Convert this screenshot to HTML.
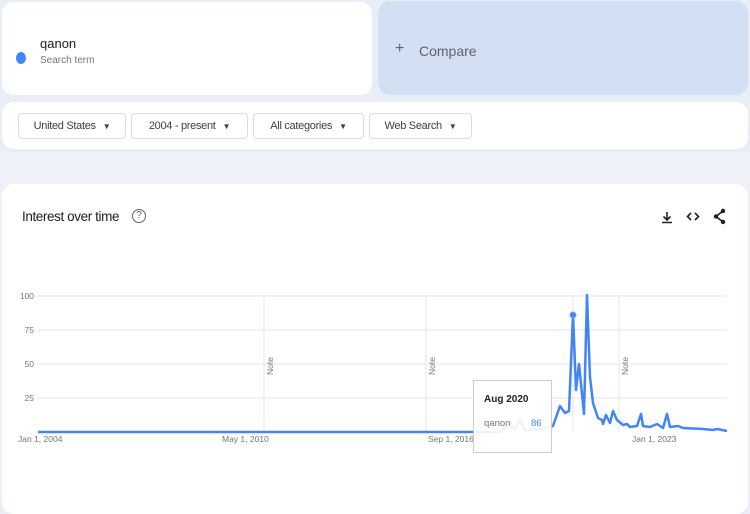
<!DOCTYPE html>
<html><head><meta charset="utf-8"><style>
*{margin:0;padding:0;box-sizing:border-box}
body{width:750px;height:500px;overflow:hidden;background:#e9eef6;font-family:"Liberation Sans",sans-serif;position:relative}
.card{position:absolute;background:#fff;border-radius:12px}
.btn{position:absolute;top:113px;height:26px;border:1px solid #dadce0;border-radius:4px;font-size:11px;letter-spacing:-0.3px;color:#3c4043;display:flex;align-items:center;justify-content:center;background:#fff}
.btn span{font-size:8px;margin-left:7px}
</style></head><body>
<div style="position:absolute;left:0;top:152px;width:750px;height:348px;background:#eef2f8"></div>
<div class="card" style="left:2px;top:2px;width:370px;height:93px">
  <div style="position:absolute;left:14px;top:50px;width:10px;height:12px;border-radius:50%;background:#4285f4"></div>
  <div style="position:absolute;left:38px;top:34px;font-size:13px;color:#202124">qanon</div>
  <div style="position:absolute;left:38px;top:53px;font-size:10px;color:#70757a">Search term</div>
</div>
<div style="position:absolute;left:378px;top:1px;width:370px;height:94px;background:#d3e0f3;border-radius:12px">
  <div style="position:absolute;left:17px;top:39px;font-size:16px;color:#5f6368">+</div>
  <div style="position:absolute;left:41px;top:42px;font-size:14px;color:#5f6368">Compare</div>
</div>
<div class="card" style="left:2px;top:102px;width:746px;height:47px"></div>
<div class="btn" style="left:18px;width:108px">United States<span>▼</span></div>
<div class="btn" style="left:131px;width:117px">2004 - present<span>▼</span></div>
<div class="btn" style="left:253px;width:111px">All categories<span>▼</span></div>
<div class="btn" style="left:369px;width:103px;top:113px">Web Search<span>▼</span></div>
<div class="card" style="left:2px;top:184px;width:746px;height:330px">
  <div style="position:absolute;left:20px;top:25px;font-size:13.5px;letter-spacing:-0.4px;color:#202124">Interest over time</div>
  <div style="position:absolute;left:130px;top:25px;width:14px;height:14px;border:1.3px solid #5f6368;border-radius:50%;font-size:10px;color:#5f6368;text-align:center;line-height:12px">?</div>
</div>
<svg width="750" height="500" style="position:absolute;left:0;top:0">
  <g stroke="#202124" stroke-width="1.6" fill="none">
    <path d="M667 212v8M663.5 216.5l3.5 3.5 3.5-3.5M662 222.5h10"/>
    <path d="M691 213l-3.5 3.5 3.5 3.5M695 213l3.5 3.5-3.5 3.5"/>
    <path d="M723 211l-7 5.5 7 5.5"/>
  </g>
  <g fill="#202124"><circle cx="723" cy="211" r="2.2"/><circle cx="716" cy="216.5" r="2.2"/><circle cx="723" cy="222" r="2.2"/></g>
  <g stroke="#e6e6e6" stroke-width="1">
    <path d="M38 296H727M38 330H727M38 364H727M38 398H727"/>
    <path d="M264 296V432M426 296V432M619 296V432M573 296V432"/>
  </g>
  <g font-size="8.5" fill="#757575" text-anchor="end">
    <text x="34" y="299">100</text><text x="34" y="333">75</text><text x="34" y="367">50</text><text x="34" y="401">25</text>
  </g>
  <g font-size="8.5" fill="#757575">
    <text x="18" y="442">Jan 1, 2004</text><text x="222" y="442">May 1, 2010</text><text x="428" y="442">Sep 1, 2016</text><text x="632" y="442">Jan 1, 2023</text>
    <text transform="translate(273,375) rotate(-90)">Note</text>
    <text transform="translate(435,375) rotate(-90)">Note</text>
    <text transform="translate(628,375) rotate(-90)">Note</text>
  </g>
  <path fill="none" stroke="#4285f4" stroke-width="2.5" stroke-linejoin="round" d="M38 432L500 432 505 428 510 422 515 430 520 420 525 430 540 429 550 427 553 426 560 406 565 413 569 411 573 314 576 390 579 364 584 414 587 295 590 377 593 403 598 418 602 420 603 424 606 415 610 423 613 411 617 420 623 425 627 424 630 427 637 426 641 414 643 426 650 427 657 424 663 428 667 414 670 427 678 426 683 428 703 429 713 430 717 429 727 431"/>
  <circle cx="573" cy="315" r="3" fill="#4285f4" stroke="#7aa4e8"/>
  <rect x="473.5" y="380.5" width="78" height="72" fill="#fff" fill-opacity="0.9" stroke="#cccccc"/>
  <text x="484" y="402" font-size="10" font-weight="bold" fill="#202124">Aug 2020</text>
  <text x="484" y="426" font-size="9.5" fill="#757575">qanon</text>
  <text x="531" y="426" font-size="9.5" fill="#4285f4">86</text>
</svg>
</body></html>
